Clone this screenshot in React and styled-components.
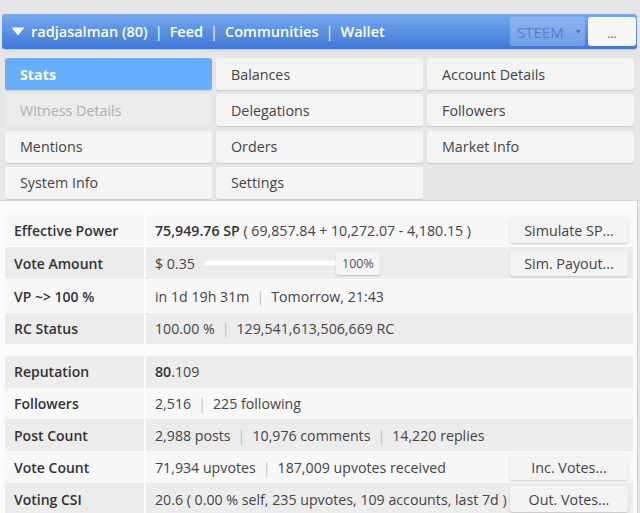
import React from "react";
import styled, { createGlobalStyle } from "styled-components";

const Global = createGlobalStyle`
  html, body { margin: 0; padding: 0; }
  body {
    background: #e6e6e6;
    font-family: "Open Sans", "Noto Sans", sans-serif;
    color: #444;
    width: 640px;
    height: 513px;
    overflow: hidden;
  }
`;

const Page = styled.div`
  padding-top: 14px;
`;

const Header = styled.div`
  margin: 0 3px 0 2px;
  height: 35px;
  box-sizing: border-box;
  display: flex;
  align-items: center;
  padding: 0 1px 0 9px;
  border-radius: 3px;
  background: linear-gradient(#75aaf1, #3f77d7);
  box-shadow: 0 1px 1px rgba(0,0,0,0.15);
`;

const Caret = styled.svg`
  width: 14px;
  height: 9px;
  margin-right: 6px;
  flex: none;
`;

const NavText = styled.div`
  flex: 1;
  color: #fff;
  font-weight: 600;
  font-size: 14.5px;
  white-space: nowrap;
`;

const Sep = styled.span`
  margin: 0 7px;
  font-weight: 400;
`;

const Select = styled.div`
  width: 75px;
  height: 29px;
  box-sizing: border-box;
  border-radius: 3px;
  background: rgba(170, 200, 245, 0.45);
  color: #5b80c2;
  font-size: 15px;
  display: flex;
  align-items: center;
  padding-left: 7px;
  gap: 11px;
  margin-right: 3px;
`;

const SelArrow = styled.span`
  font-size: 7px;
  color: #4a6fb0;
`;

const MoreBtn = styled.div`
  width: 48px;
  height: 29px;
  border-radius: 3px;
  background: #f7f7f7;
  color: #555;
  font-size: 12px;
  display: flex;
  align-items: center;
  justify-content: center;
  padding-top: 3px;
  box-sizing: border-box;
`;

const Nav = styled.div`
  display: grid;
  grid-template-columns: repeat(3, 1fr);
  column-gap: 4px;
  row-gap: 3px;
  padding: 9px 6px 0 5px;
  height: 152px;
  box-sizing: border-box;
  border-bottom: 1px solid #d8d8d8;
`;

const Tab = styled.div`
  height: 32px;
  border-radius: 3px;
  display: flex;
  align-items: center;
  padding-left: 15px;
  font-size: 14.3px;
  background: ${p => (p.$active ? "#66adfb" : p.$disabled ? "#ebebeb" : "#f4f4f4")};
  color: ${p => (p.$active ? "#fff" : p.$disabled ? "#b0b0b0" : "#444")};
  font-weight: ${p => (p.$active ? 700 : 400)};
  box-shadow: ${p => (p.$disabled ? "none" : "0 1px 1px rgba(0,0,0,0.12)")};
`;

const Panel = styled.div`
  background: #fbfbfb;
  border-right: 1px solid #cfcfcf;
  margin-right: 2px;
  padding: 13px 4px 0 5px;
  height: 320px;
  box-sizing: border-box;
`;

const Group = styled.div`
  display: flex;
  flex-direction: column;
  gap: ${p => p.$gap}px;
  margin-bottom: ${p => p.$mb || 0}px;
`;

const Row = styled.div`
  display: flex;
  height: ${p => p.$h}px;
  background: ${p => (p.$alt ? "#ececec" : "#f8f8f8")};
  align-items: stretch;
`;

const Label = styled.div`
  width: 141px;
  flex: none;
  box-sizing: border-box;
  padding-left: 9px;
  display: flex;
  align-items: center;
  font-weight: 600;
  font-size: 14px;
  color: #333;
  border-right: 2px solid #fdfdfd;
`;

const Value = styled.div`
  flex: 1;
  display: flex;
  align-items: center;
  padding-left: 9px;
  font-size: 14.2px;
  color: #444;
  white-space: nowrap;
  min-width: 0;
`;

const Text = styled.span`
  flex: 1;
`;

const Strong = styled.b`
  font-weight: 600;
  color: #333;
`;

const Bar = styled.span`
  color: #c2c2c2;
  margin: 0 7px;
`;

const RowBtn = styled.div`
  width: 118px;
  height: 26px;
  flex: none;
  margin-right: 5px;
  border-radius: 3px;
  background: #f3f3f3;
  box-shadow: 0 1px 2px rgba(0,0,0,0.18);
  display: flex;
  align-items: center;
  justify-content: center;
  font-size: 14.3px;
  color: #444;
`;

const Slider = styled.div`
  display: flex;
  align-items: center;
  flex: 1;
`;

const Track = styled.div`
  width: 132px;
  height: 4px;
  margin-left: 9px;
  background: #fff;
  border: 1px dotted #e2e2e2;
  border-radius: 2px;
`;

const Handle = styled.div`
  width: 44px;
  height: 23px;
  margin-left: -2px;
  border-radius: 3px;
  background: #f4f4f4;
  box-shadow: 0 1px 2px rgba(0,0,0,0.2);
  display: flex;
  align-items: center;
  justify-content: center;
  font-size: 12.5px;
  color: #555;
`;

const tabs = [
  { t: "Stats", active: true },
  { t: "Balances" },
  { t: "Account Details" },
  { t: "Witness Details", disabled: true },
  { t: "Delegations" },
  { t: "Followers" },
  { t: "Mentions" },
  { t: "Orders" },
  { t: "Market Info" },
  { t: "System Info" },
  { t: "Settings" },
];

export default function App() {
  return (
    <>
      <Global />
      <Page>
        <Header>
          <Caret viewBox="0 0 14 9">
            <path d="M0.5 0.5 H13.5 L7 8.5 Z" fill="#fff" />
          </Caret>
          <NavText>
            radjasalman (80)<Sep>|</Sep>Feed<Sep>|</Sep>Communities<Sep>|</Sep>Wallet
          </NavText>
          <Select>
            STEEM <SelArrow>▼</SelArrow>
          </Select>
          <MoreBtn>...</MoreBtn>
        </Header>
        <Nav>
          {tabs.map(x => (
            <Tab key={x.t} $active={x.active} $disabled={x.disabled}>
              {x.t}
            </Tab>
          ))}
        </Nav>
        <Panel>
          <Group $gap={1} $mb={12}>
            <Row $h={32}>
              <Label>Effective Power</Label>
              <Value>
                <Text>
                  <Strong>75,949.76 SP</Strong> ( 69,857.84 + 10,272.07 - 4,180.15 )
                </Text>
                <RowBtn>Simulate SP...</RowBtn>
              </Value>
            </Row>
            <Row $h={32} $alt>
              <Label>Vote Amount</Label>
              <Value>
                <Slider>
                  $ 0.35
                  <Track />
                  <Handle>100%</Handle>
                </Slider>
                <RowBtn>Sim. Payout...</RowBtn>
              </Value>
            </Row>
            <Row $h={32}>
              <Label>VP ~&gt; 100 %</Label>
              <Value>
                in 1d 19h 31m<Bar>|</Bar>Tomorrow, 21:43
              </Value>
            </Row>
            <Row $h={31} $alt>
              <Label>RC Status</Label>
              <Value>
                100.00 %<Bar>|</Bar>129,541,613,506,669 RC
              </Value>
            </Row>
          </Group>
          <Group $gap={0}>
            <Row $h={31.5} $alt>
              <Label>Reputation</Label>
              <Value>
                <span><Strong>80</Strong>.109</span>
              </Value>
            </Row>
            <Row $h={31.5}>
              <Label>Followers</Label>
              <Value>
                2,516<Bar>|</Bar>225 following
              </Value>
            </Row>
            <Row $h={32} $alt>
              <Label>Post Count</Label>
              <Value>
                2,988 posts<Bar>|</Bar>10,976 comments<Bar>|</Bar>14,220 replies
              </Value>
            </Row>
            <Row $h={32}>
              <Label>Vote Count</Label>
              <Value>
                <Text>
                  71,934 upvotes<Bar>|</Bar>187,009 upvotes received
                </Text>
                <RowBtn>Inc. Votes...</RowBtn>
              </Value>
            </Row>
            <Row $h={32} $alt>
              <Label>Voting CSI</Label>
              <Value>
                <Text>20.6 ( 0.00 % self, 235 upvotes, 109 accounts, last 7d )</Text>
                <RowBtn>Out. Votes...</RowBtn>
              </Value>
            </Row>
          </Group>
        </Panel>
      </Page>
    </>
  );
}
